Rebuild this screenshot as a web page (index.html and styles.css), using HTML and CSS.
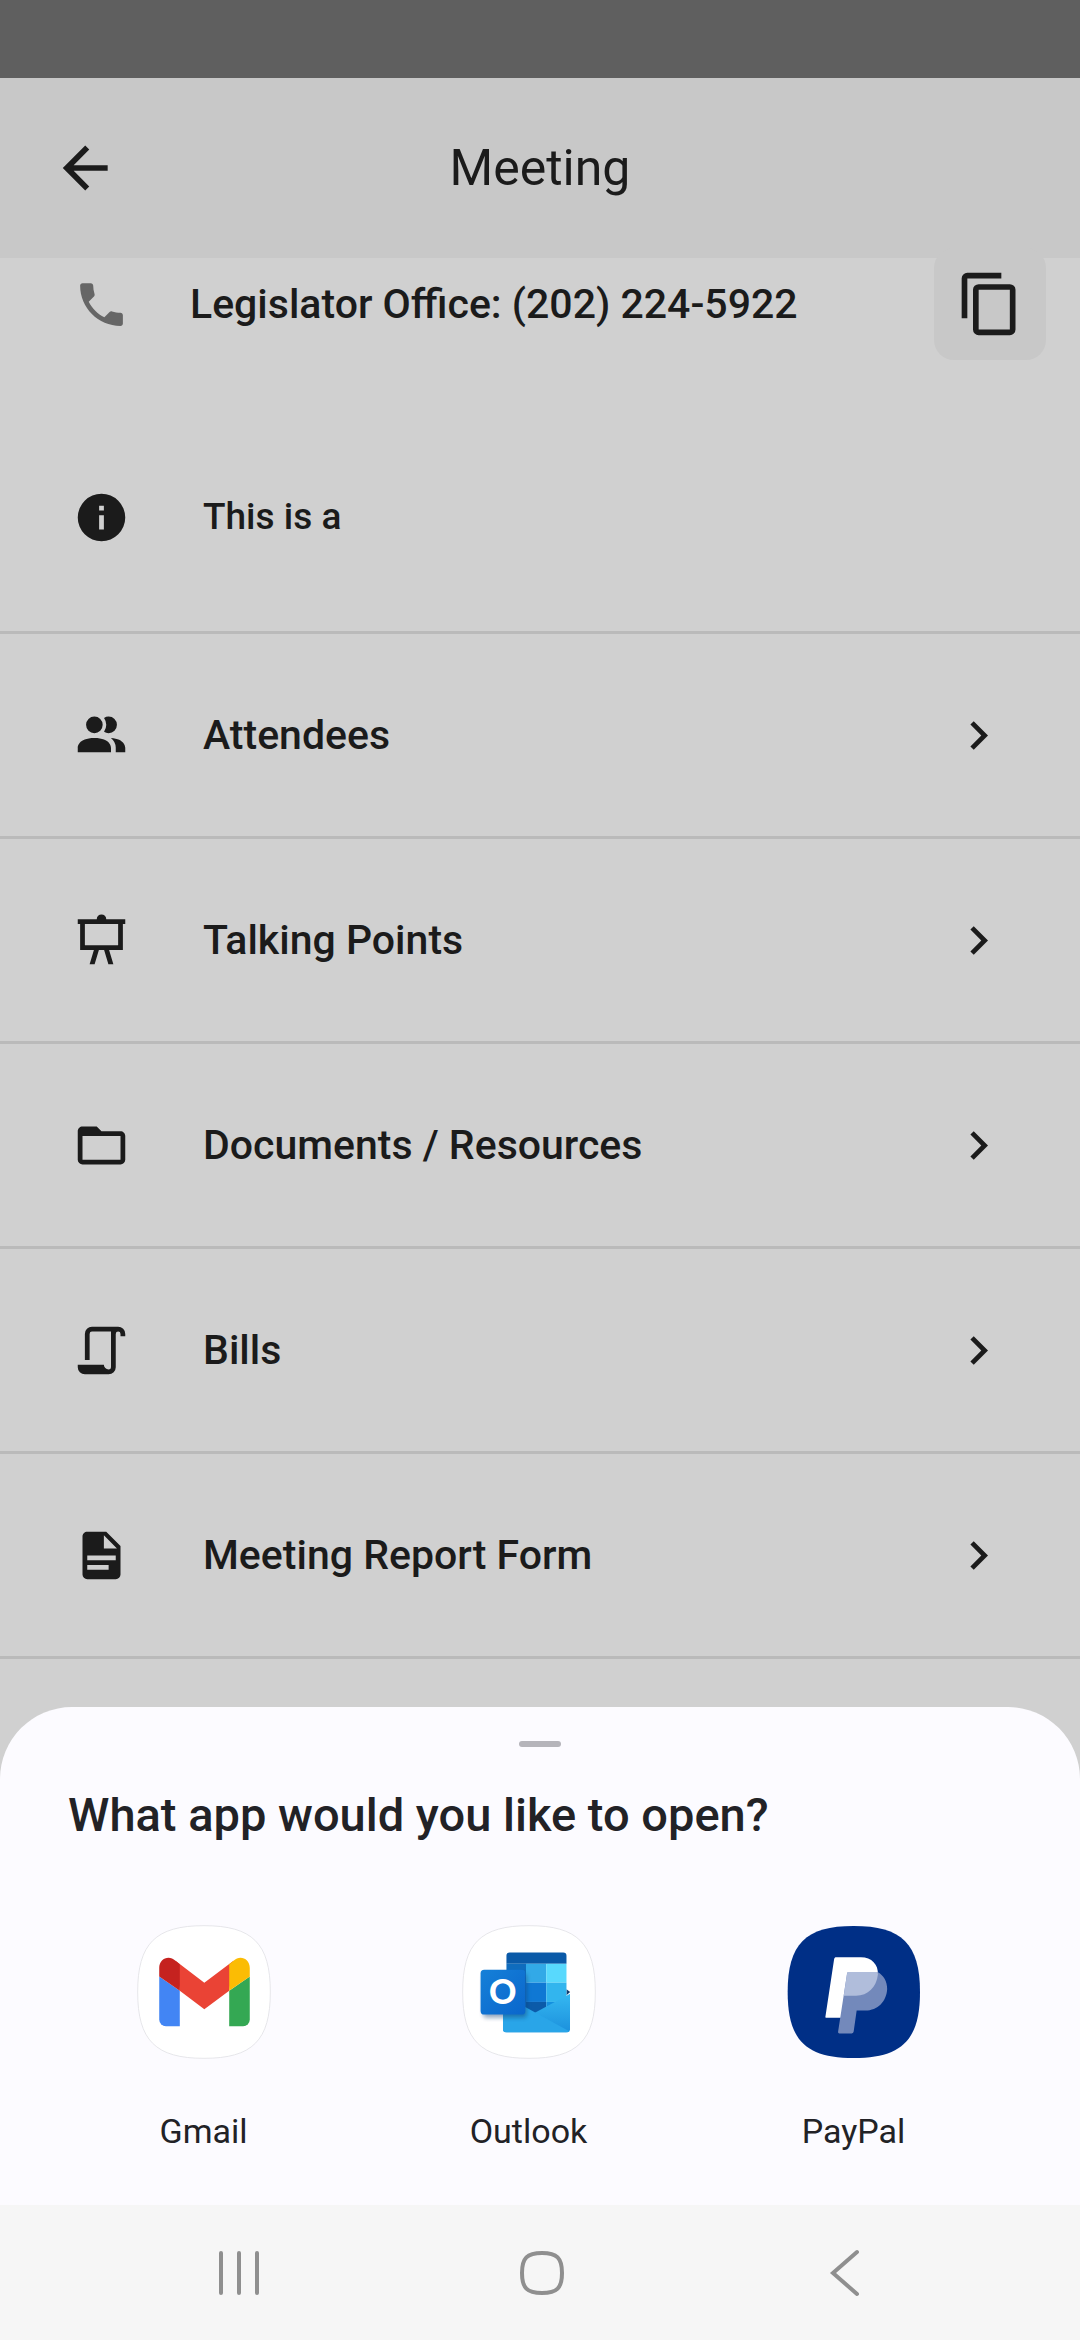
FILE: index.html
```html
<!DOCTYPE html>
<html lang="en">
<head>
  <meta charset="UTF-8">
  <meta name="viewport" content="width=device-width, initial-scale=1">
  <title>Meeting</title>
  <link rel="stylesheet" href="styles.css">
</head>
<body>
  <div class="status-bar"></div>

  <header class="app-bar">
    <button class="icon-button" aria-label="Back">
      <svg class="icon-large" viewBox="0 0 24 24"><path d="M20 11v2H8l5.5 5.5-1.42 1.42L4.16 12l7.92-7.92L13.5 5.5 8 11h12z"/></svg>
    </button>
    <h1>Meeting</h1>
  </header>

  <main>
    <div class="phone-row">
      <svg class="icon phone" viewBox="0 0 24 24"><path d="M6.62 10.79c1.44 2.83 3.76 5.14 6.59 6.59l2.2-2.2c.27-.27.67-.36 1.02-.24 1.12.37 2.33.57 3.57.57.55 0 1 .45 1 1V20c0 .55-.45 1-1 1C10.61 21 3 13.39 3 4c0-.55.45-1 1-1h3.5c.55 0 1 .45 1 1 0 1.25.2 2.45.57 3.57.11.35.03.74-.25 1.02l-2.2 2.2z"/></svg>
      <span>Legislator Office: (202) 224-5922</span>
      <button class="copy" aria-label="Copy">
        <svg class="icon-large" viewBox="0 0 24 24"><path d="M19 21H8V7h11m0-2H8a2 2 0 0 0-2 2v14a2 2 0 0 0 2 2h11a2 2 0 0 0 2-2V7a2 2 0 0 0-2-2m-3-4H4a2 2 0 0 0-2 2v14h2V3h12V1z"/></svg>
      </button>
    </div>

    <div class="row info">
      <svg class="icon" viewBox="0 0 24 24"><path d="M13 9h-2V7h2m0 10h-2v-6h2m-1-9A10 10 0 0 0 2 12a10 10 0 0 0 10 10 10 10 0 0 0 10-10A10 10 0 0 0 12 2z"/></svg>
      <span>This is a</span>
    </div>

    <a class="row" href="#attendees">
      <svg class="icon" viewBox="0 0 24 24"><path d="M16 17v2H2v-2s0-4 7-4 7 4 7 4m-3.5-9.5A3.5 3.5 0 1 0 9 11a3.5 3.5 0 0 0 3.5-3.5m3.44 5.5A5.32 5.32 0 0 1 18 17v2h4v-2s0-3.63-6.06-4M15 4a3.39 3.39 0 0 0-1.93.59 5 5 0 0 1 0 5.82A3.39 3.39 0 0 0 15 11a3.5 3.5 0 0 0 0-7z"/></svg>
      <span>Attendees</span>
      <svg class="icon chevron" viewBox="0 0 24 24"><path d="M8.59 16.58 13.17 12 8.59 7.41 10 6l6 6-6 6-1.41-1.42z"/></svg>
    </a>
    <a class="row" href="#talking-points">
      <svg class="icon" viewBox="0 0 24 24"><path d="M10 3a2 2 0 0 1 4 0h8v2h-1v11h-5.8l1.8 6h-2.1l-1.8-6h-2.2l-1.8 6H7l1.8-6H3V5H2V3h8m-5 2v9h14V5H5z"/></svg>
      <span>Talking Points</span>
      <svg class="icon chevron" viewBox="0 0 24 24"><path d="M8.59 16.58 13.17 12 8.59 7.41 10 6l6 6-6 6-1.41-1.42z"/></svg>
    </a>
    <a class="row" href="#documents">
      <svg class="icon" viewBox="0 0 24 24"><path d="M20 18H4V8h16m0-2h-8l-2-2H4c-1.11 0-2 .89-2 2v12a2 2 0 0 0 2 2h16a2 2 0 0 0 2-2V8c0-1.11-.9-2-2-2z"/></svg>
      <span>Documents / Resources</span>
      <svg class="icon chevron" viewBox="0 0 24 24"><path d="M8.59 16.58 13.17 12 8.59 7.41 10 6l6 6-6 6-1.41-1.42z"/></svg>
    </a>
    <a class="row" href="#bills">
      <svg class="icon" viewBox="0 0 24 24"><path d="M15 20a1 1 0 0 0 1-1V4H8a1 1 0 0 0-1 1v11H5V5a3 3 0 0 1 3-3h11a3 3 0 0 1 3 3v1h-2V5a1 1 0 0 0-1-1 1 1 0 0 0-1 1v14a3 3 0 0 1-3 3H5a3 3 0 0 1-3-3v-1h11a2 2 0 0 0 2 2z"/></svg>
      <span>Bills</span>
      <svg class="icon chevron" viewBox="0 0 24 24"><path d="M8.59 16.58 13.17 12 8.59 7.41 10 6l6 6-6 6-1.41-1.42z"/></svg>
    </a>
    <a class="row" href="#report">
      <svg class="icon" viewBox="0 0 24 24"><path d="M13 9h5.5L13 3.5V9M6 2h8l6 6v12a2 2 0 0 1-2 2H6a2 2 0 0 1-2-2V4c0-1.11.89-2 2-2m9 16v-2H6v2h9m3-4v-2H6v2h12z"/></svg>
      <span>Meeting Report Form</span>
      <svg class="icon chevron" viewBox="0 0 24 24"><path d="M8.59 16.58 13.17 12 8.59 7.41 10 6l6 6-6 6-1.41-1.42z"/></svg>
    </a>
  </main>

  <section class="sheet">
    <div class="handle"></div>
    <h2>What app would you like to open?</h2>
    <div class="apps">
      <button class="app">
        <svg class="app-icon" viewBox="50 48 404 404">
          <path fill="#fff" stroke="#e6e6ea" stroke-width="3" d="M52 250C52 104 106 50 252 50S452 104 452 250 398 450 252 450 52 396 52 250z"/>
          <path fill="#4285f4" d="M117 203v130a20 20 0 0 0 20 20h42V246z"/>
          <path fill="#34a853" d="M328 246v107h42a20 20 0 0 0 20-20V203z"/>
          <path fill="#ea4335" d="M166 156l87 66 88-66-13 90-75 56-74-56z"/>
          <path fill="#fbbc04" d="M328 166l13-10c20-19 49-6 49 22v25l-62 43z"/>
          <path fill="#c5221f" d="M179 166l-13-10c-20-19-49-6-49 22v25l62 43z"/>
        </svg>
        <span>Gmail</span>
      </button>
      <button class="app">
        <svg class="app-icon" viewBox="64 48 404 404">
          <defs>
            <linearGradient id="tile" x1="0" y1="0" x2="1" y2="1">
              <stop offset="0" stop-color="#1580d8"/>
              <stop offset="1" stop-color="#0a66cc"/>
            </linearGradient>
            <linearGradient id="flap" x1="0" y1="0" x2="0" y2="1">
              <stop offset="0" stop-color="#35b8f1"/>
              <stop offset="1" stop-color="#1b8fdc"/>
            </linearGradient>
            <clipPath id="envelope"><path d="M187 250h203v110a12 12 0 0 1-12 12H199a12 12 0 0 1-12-12z"/></clipPath>
            <filter id="soft" x="-20%" y="-20%" width="140%" height="140%"><feGaussianBlur stdDeviation="6"/></filter>
          </defs>
          <path fill="#fff" stroke="#e6e6ea" stroke-width="3" d="M66 250C66 104 120 50 266 50S466 104 466 250 412 450 266 450 66 396 66 250z"/>
          <path fill="#123b6d" d="M379 242l11 8-11 10z"/>
          <path fill="#0a5aa8" d="M208 131h161a10 10 0 0 1 10 10v24H198v-24a10 10 0 0 1 10-10z"/>
          <path fill="#0f6cbd" d="M198 165h60v145h-60z"/>
          <path fill="#32a9e7" d="M257 165h61v57h-61z"/>
          <path fill="#58d9fd" d="M318 165h61v57h-61z"/>
          <path fill="#0f78d4" d="M257 222h61v58h-61z"/>
          <path fill="#32b5ee" d="M318 222h61v58h-61z"/>
          <path fill="#0c5ba9" d="M257 280h61v40h-61z"/>
          <path fill="#1490df" d="M318 280h61v20h-61z"/>
          <g clip-path="url(#envelope)">
            <path fill="url(#flap)" d="M390 255v120H187v-10z"/>
            <path fill="#29a5e8" d="M187 258l203 112v10H187z"/>
          </g>
          <rect x="128" y="194" width="132" height="134" rx="12" fill="#0b3d70" opacity=".45" filter="url(#soft)"/>
          <rect x="120" y="183" width="135" height="135" rx="11" fill="url(#tile)"/>
          <text class="outlook-letter" x="187" y="287" text-anchor="middle">O</text>
        </svg>
        <span>Outlook</span>
      </button>
      <button class="app">
        <svg class="app-icon" viewBox="49 48 404 404">
          <path fill="#002f86" d="M51 250C51 105 105 51 250 51S450 105 450 250 395 449 250 449 51 395 51 250z"/>
          <path fill="#fff" d="M197 145h75c32 0 53 22 51 52-4 38-30 64-66 64h-35l-10 67h-43c-4 0-5-2-4-5l26-172c1-4 3-6 6-6z"/>
          <path fill="#7389bb" d="M234 190h88c18 10 29 28 29 51-2 37-28 65-66 65h-26l-9 63c-1 4-3 6-6 6h-37c-3 0-4-2-4-5l27-175c1-3 2-5 4-5z"/>
          <path fill="#b0bddb" d="M234 190h88l1 7c-4 38-30 64-66 64h-37l10-66c1-3 2-5 4-5z"/>
        </svg>
        <span>PayPal</span>
      </button>
    </div>
  </section>

  <nav class="nav-bar">
    <button aria-label="Recent apps">
      <svg class="nav-icon" viewBox="0 0 48 48"><path d="M6 4v40M24 4v40M42 4v40"/></svg>
    </button>
    <button aria-label="Home">
      <svg class="nav-icon" viewBox="0 0 48 48"><path d="M24 4C39 4 44 9 44 24S39 44 24 44 4 39 4 24 9 4 24 4z"/></svg>
    </button>
    <button aria-label="Back">
      <svg class="nav-icon" viewBox="0 0 48 48"><path d="M36 3L12 24l24 21"/></svg>
    </button>
  </nav>
</body>
</html>
```
FILE: styles.css
```css
* { box-sizing: border-box; }
body {
  margin: 0;
  min-height: 100vh;
  display: flex;
  flex-direction: column;
  background-color: #d0d0d0;
  color: #1b1b1b;
  font-family: Roboto, "Liberation Sans", sans-serif;
}
button { border: none; padding: 0; background: none; color: inherit; font: inherit; cursor: pointer; }
svg { display: block; flex: none; }
h1, h2 { margin: 0; }

.status-bar { height: 78px; background-color: #5f5f5f; }

.app-bar {
  display: grid;
  grid-template-columns: 68px 1fr 68px;
  align-items: center;
  height: 180px;
  padding: 0 51px;
  background-color: #c8c8c8;
}
.app-bar h1 { font-size: 50px; font-weight: 400; line-height: 60px; text-align: center; }
.icon { width: 57px; height: 57px; fill: currentColor; }
.icon-large { width: 68px; height: 68px; fill: currentColor; }

main { flex: 1; font-size: 41px; font-weight: 500; line-height: 48px; }
/* scrolled a little way under the app bar */
.phone-row {
  display: flex;
  align-items: center;
  height: 112px;
  margin: -10px 34px 43px 73px;
}
.phone-row span { flex: 1; padding-left: 60px; }
.phone { color: #666; }
.copy {
  display: flex;
  align-items: center;
  justify-content: center;
  width: 112px;
  height: 112px;
  border-radius: 20px;
  background-color: #c8c8c8;
}
.row {
  display: flex;
  align-items: center;
  gap: 73px;
  height: 205px;
  padding: 0 73px;
  border-bottom: 3px solid #bababa;
  color: inherit;
  text-decoration: none;
}
.row.info { height: 231px; font-size: 37px; }
.chevron { margin-left: auto; }

.sheet {
  padding: 34px 0 54px;
  border-radius: 72px 72px 0 0;
  background-color: #fcfbff;
  color: #222226;
}
.handle { width: 42px; height: 6px; margin: 0 auto; border-radius: 3px; background-color: #b5b4ba; }
.sheet h2 { margin: 40px 68px 82px; font-size: 47px; font-weight: 500; line-height: 56px; }
.apps { display: grid; grid-template-columns: repeat(3, 1fr); padding: 0 64px 0 41px; }
.app { display: flex; flex-direction: column; align-items: center; gap: 52px; font-size: 34px; line-height: 40px; }
.app-icon { width: 134px; height: 134px; }
.outlook-letter { font: 900 102px Lato, sans-serif; fill: #fff; }

.nav-bar {
  display: grid;
  grid-template-columns: repeat(3, 1fr);
  height: 135px;
  padding: 0 84px 0 88px;
  background-color: #f6f6f6;
}
.nav-bar button { display: flex; align-items: center; justify-content: center; }
.nav-icon { width: 48px; height: 48px; fill: none; stroke: #8f8f8f; stroke-width: 4; stroke-linecap: round; }
```
